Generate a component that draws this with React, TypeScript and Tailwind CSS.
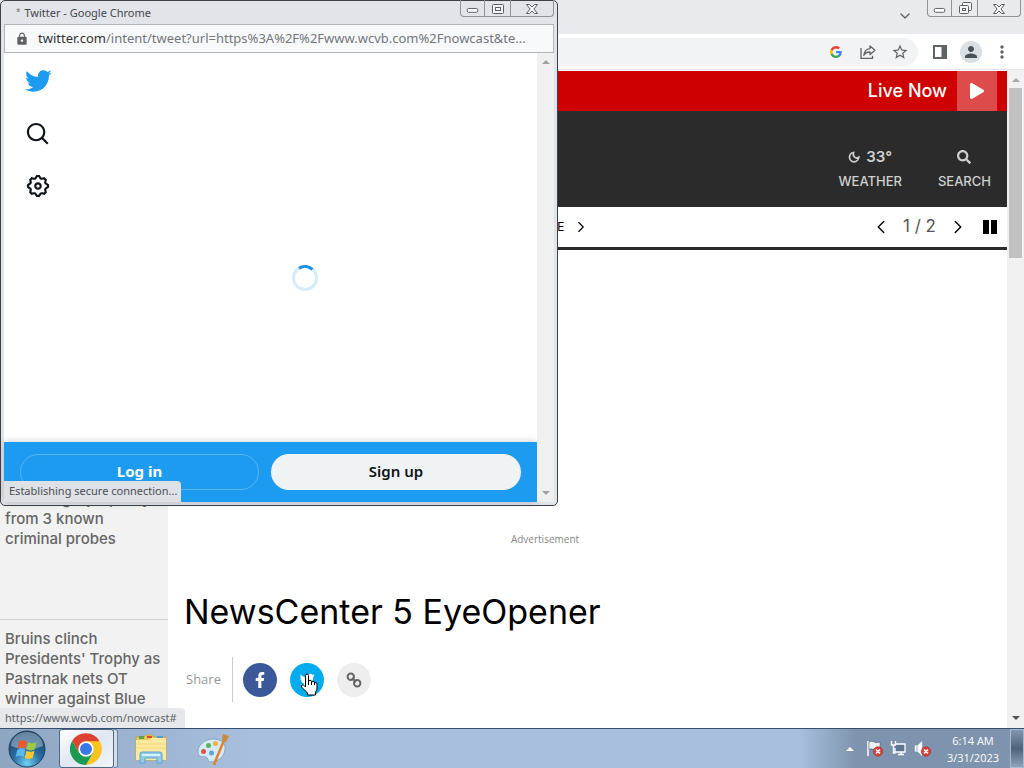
import type { ReactNode } from "react";
import { FaFacebookF, FaSearch, FaPlay } from "react-icons/fa";
import { MdLock, MdPerson, MdStarBorder, MdMoreVert } from "react-icons/md";
import { ChevronDown, ChevronLeft, ChevronRight } from "lucide-react";
import { clsx } from "clsx";

const BIRD =
  "M23.643 4.937c-.835.37-1.732.62-2.675.733.962-.576 1.7-1.49 2.048-2.578-.9.534-1.897.922-2.958 1.13-.85-.904-2.06-1.47-3.4-1.47-2.572 0-4.658 2.086-4.658 4.66 0 .364.042.718.12 1.06-3.873-.195-7.304-2.05-9.602-4.868-.4.69-.63 1.49-.63 2.342 0 1.616.823 3.043 2.072 3.878-.764-.025-1.482-.234-2.11-.583v.06c0 2.257 1.605 4.14 3.737 4.568-.392.106-.803.162-1.227.162-.3 0-.593-.028-.877-.082.593 1.85 2.313 3.198 4.352 3.234-1.595 1.25-3.604 1.995-5.786 1.995-.376 0-.747-.022-1.112-.065 2.062 1.323 4.51 2.093 7.14 2.093 8.57 0 13.255-7.098 13.255-13.254 0-.2-.005-.402-.014-.602.91-.658 1.7-1.477 2.323-2.41z";
const SEARCH =
  "M10.25 3.75c-3.59 0-6.5 2.91-6.5 6.5s2.91 6.5 6.5 6.5c1.795 0 3.419-.726 4.596-1.904 1.178-1.177 1.904-2.801 1.904-4.596 0-3.59-2.91-6.5-6.5-6.5zm-8.5 6.5c0-4.694 3.806-8.5 8.5-8.5s8.5 3.806 8.5 8.5c0 1.986-.682 3.815-1.824 5.262l4.781 4.781-1.414 1.414-4.781-4.781c-1.447 1.142-3.276 1.824-5.262 1.824-4.694 0-8.5-3.806-8.5-8.5z";
const GEAR =
  "M10.54 1.75h2.92l1.57 2.36c.11.17.32.25.53.21l2.53-.59 2.17 2.17-.58 2.54c-.05.2.04.41.21.53l2.36 1.57v2.92l-2.36 1.57c-.17.12-.26.33-.21.53l.58 2.54-2.17 2.17-2.53-.59c-.21-.04-.42.04-.53.21l-1.57 2.36h-2.92l-1.58-2.36c-.11-.17-.32-.25-.52-.21l-2.54.59-2.17-2.17.58-2.54c.05-.2-.03-.41-.21-.53l-2.35-1.57v-2.92L4.1 8.97c.18-.12.26-.33.21-.53L3.73 5.9 5.9 3.73l2.54.59c.2.04.41-.04.52-.21l1.58-2.36zm1.07 2l-.98 1.47C10.05 6.08 9 6.5 7.99 6.27l-1.46-.34-.6.6.33 1.46c.24 1.01-.18 2.07-1.05 2.64l-1.46.98v.78l1.46.98c.87.57 1.29 1.63 1.05 2.64l-.33 1.46.6.6 1.46-.34c1.01-.23 2.06.19 2.64 1.05l.98 1.47h.78l.97-1.47c.58-.86 1.63-1.28 2.65-1.05l1.45.34.61-.6-.34-1.46c-.23-1.01.18-2.07 1.05-2.64l1.47-.98v-.78l-1.47-.98c-.87-.57-1.28-1.63-1.05-2.64l.34-1.46-.61-.6-1.45.34c-1.02.23-2.07-.19-2.65-1.05l-.97-1.47h-.78zM12 10.5c-.83 0-1.5.67-1.5 1.5s.67 1.5 1.5 1.5c.83 0 1.5-.67 1.5-1.5s-.67-1.5-1.5-1.5zM8.5 12c0-1.93 1.56-3.5 3.5-3.5 1.93 0 3.5 1.57 3.5 3.5s-1.57 3.5-3.5 3.5c-1.94 0-3.5-1.57-3.5-3.5z";

interface GlyphProps {
  d: string;
  className?: string;
}

function Glyph({ d, className }: Readonly<GlyphProps>) {
  return (
    <svg viewBox="0 0 24 24" fill="currentColor" className={className}>
      <path d={d} />
    </svg>
  );
}

interface IconButtonProps {
  label: string;
  className?: string;
  children?: ReactNode;
}

function IconButton({ label, className, children }: Readonly<IconButtonProps>) {
  return (
    <button type="button" aria-label={label} className={clsx("flex shrink-0 items-center justify-center", className)}>
      {children}
    </button>
  );
}

function WindowControls({ maximized }: Readonly<{ maximized: boolean }>) {
  return (
    <div className="flex h-[17px] divide-x divide-[#8f9399] rounded-b-[4px] border border-t-0 border-[#8f9399] text-[#5a5e66]">
      <IconButton label="Minimize" className="w-6">
        <svg viewBox="0 0 24 16" className="h-4 w-6" fill="#fff" stroke="currentColor">
          <rect x="6.5" y="8.5" width="11" height="4" rx="1.5" />
        </svg>
      </IconButton>
      <IconButton label={maximized ? "Restore" : "Maximize"} className="w-[26px]">
        {maximized ? (
          <svg viewBox="0 0 24 16" className="h-4 w-6" fill="#f4f5f7" stroke="currentColor">
            <rect x="9.5" y="2.5" width="9" height="8" rx="1" />
            <rect x="6.5" y="5.5" width="9" height="8" rx="1" />
            <rect x="9.5" y="8.5" width="3" height="2" />
          </svg>
        ) : (
          <svg viewBox="0 0 24 16" className="h-4 w-6" fill="#f4f5f7" stroke="currentColor">
            <rect x="6.5" y="4.5" width="11" height="9" rx="1" />
            <rect x="9.5" y="7.5" width="5" height="3" />
          </svg>
        )}
      </IconButton>
      <IconButton label="Close" className="w-[42px]">
        <svg viewBox="0 0 24 16" className="h-4 w-6" fill="#f4f5f7" stroke="currentColor">
          <path d="M6.5 4.5h3l2.500 2.500 2.500-2.500h3l-3.500 4.500 3.500 4.500h-3l-2.500-2.500-2.500 2.500h-3l3.500-4.500z" />
        </svg>
      </IconButton>
    </div>
  );
}

function GoogleG() {
  return (
    <svg viewBox="0 0 24 24" className="size-3">
      <path fill="#4285f4" d="M23.500 12.300c0-.8-.1-1.600-.2-2.300H12v4.500h6.500c-.3 1.500-1.100 2.700-2.400 3.600v3h3.900c2.200-2.100 3.500-5.200 3.500-8.800z" />
      <path fill="#34a853" d="M12 24c3.200 0 6-1.100 8-2.900l-3.900-3c-1.100.7-2.400 1.200-4.100 1.200-3.100 0-5.800-2.100-6.700-5H1.300v3.100C3.300 21.300 7.300 24 12 24z" />
      <path fill="#fbbc05" d="M5.300 14.300c-.5-1.500-.5-3.100 0-4.600V6.600h-4c-1.700 3.400-1.700 7.400 0 10.800z" />
      <path fill="#ea4335" d="M12 4.800c1.800 0 3.300.6 4.600 1.800L20 3.200C17.900 1.200 15.200 0 12 0 7.300 0 3.300 2.700 1.300 6.600l4 3.100c.9-2.900 3.600-4.900 6.700-4.900z" />
    </svg>
  );
}

function BrowserChrome() {
  return (
    <header className="shrink-0 text-[#5f6368]">
      <div className="flex h-[34px] items-start justify-end bg-[#e8eaed] pr-[3px]">
        <IconButton label="Search tabs" className="mt-2 mr-3.5 size-4">
          <ChevronDown className="size-4" />
        </IconButton>
        <WindowControls maximized />
      </div>
      <div className="flex h-9 items-center border-b border-[#e3e5e8] bg-white pr-3.5">
        <div className="flex h-7 flex-1 items-center justify-end gap-4 rounded-full bg-[#f1f3f4] pr-2.5">
          <IconButton label="Search with Google" className="size-4">
            <GoogleG />
          </IconButton>
          <IconButton label="Share this page" className="size-4">
            <svg viewBox="0 0 16 16" className="size-4" fill="none" stroke="currentColor" strokeWidth="1.3">
              <path d="M1 4v10.300h11.500v-2.500" />
              <path d="M10 2l5 4.300-5 4.200V8C7 8 5 9 3.800 11.300 4.200 7.500 6.500 5 10 4.600z" strokeLinejoin="round" />
            </svg>
          </IconButton>
          <IconButton label="Bookmark this tab" className="size-4">
            <MdStarBorder className="size-[18px] shrink-0" />
          </IconButton>
        </div>
        <IconButton label="Side panel" className="ml-3.5 size-4">
          <svg viewBox="0 0 16 16" className="size-4">
            <path fill="currentColor" fillRule="evenodd" d="M1 1h14v14H1zM3 3v10h6.500V3z" />
          </svg>
        </IconButton>
        <IconButton label="Profile" className="ml-3 size-[22px] rounded-full bg-[#dadfe4] text-[#4a5258]">
          <MdPerson className="size-[18px]" />
        </IconButton>
        <IconButton label="Menu" className="ml-3 size-4">
          <MdMoreVert className="size-5 shrink-0" />
        </IconButton>
      </div>
    </header>
  );
}

function StationHeader() {
  return (
    <>
      <div className="flex h-10 items-center justify-end bg-[#cf0000] pr-2.5 font-['Inter',sans-serif] text-white">
        <span className="mr-2.5 text-lg font-medium">Live Now</span>
        <IconButton label="Play live stream" className="size-10 bg-[#de4b4b]">
          <FaPlay className="size-4" />
        </IconButton>
      </div>
      <div className="flex h-24 items-center justify-end gap-9 bg-[#2b2b2b] pt-5 pr-4 font-['Inter',sans-serif] text-[13px] font-medium text-[#cfcfcf]">
        <a href="#weather" className="flex flex-col items-center">
          <span className="flex h-6 items-center gap-1.5 text-[15px] font-semibold">
            <svg viewBox="0 0 24 24" className="size-3" fill="none" stroke="currentColor" strokeWidth="3.5">
              <path d="M11 3C6 3.500 3 8 3 12.500 3 17.500 7 21.500 12 21.500s9-4 9.500-9c-3 2-6.500 1.500-8.500-.5s-3-6-2-9z" />
            </svg>
            33°
          </span>
          <span className="leading-6">WEATHER</span>
        </a>
        <a href="#search" className="flex flex-col items-center">
          <span className="flex h-6 items-center">
            <FaSearch className="size-3.5" />
          </span>
          <span className="leading-6">SEARCH</span>
        </a>
      </div>
      <nav className="flex h-[43px] items-center border-b-[3px] border-[#2b2b2b] bg-white pr-[7px] font-['Inter',sans-serif] text-black">
        <a href="#more" className="flex flex-1 items-center gap-2 pl-[504px] text-xs whitespace-nowrap">
          SEE MORE
          <ChevronRight className="size-[18px]" strokeWidth={1.5} />
        </a>
        <IconButton label="Previous" className="size-5">
          <ChevronLeft className="size-[22px] shrink-0" strokeWidth={1.5} />
        </IconButton>
        <span className="mx-3 text-[17px] text-[#555]">1 / 2</span>
        <IconButton label="Next" className="size-5">
          <ChevronRight className="size-[22px] shrink-0" strokeWidth={1.5} />
        </IconButton>
        <IconButton label="Pause" className="ml-3 size-5">
          <svg viewBox="0 0 14 14" className="size-3.5" fill="currentColor">
            <path d="M0 0h6v14H0zM8 0h6v14H8z" />
          </svg>
        </IconButton>
      </nav>
    </>
  );
}

function Headlines() {
  return (
    <aside className="w-[168px] shrink-0 bg-[#f2f2f2] font-['Inter',sans-serif] text-[15px] leading-5 font-medium whitespace-nowrap text-[#666]">
      <a href="#probes" className="block border-b border-[#d2d2d2] px-[5px] pt-[239px] pb-[70px]">
        Other legal jeopardy
        <br />
        from 3 known
        <br />
        criminal probes
      </a>
      <a href="#bruins" className="block px-[5px] pt-[9px]">
        Bruins clinch
        <br />
        Presidents' Trophy as
        <br />
        Pastrnak nets OT
        <br />
        winner against Blue
      </a>
    </aside>
  );
}

function HandCursor() {
  return (
    <svg viewBox="0 0 20 24" className="pointer-events-none absolute top-2.5 left-2.5 h-6 w-5">
      <path
        d="M5.500 2.500q0-1.500 1.500-1.500t1.500 1.500v6q0-1.200 1.500-1.200t1.500 1.200v1q0-1.200 1.500-1.200t1.500 1.200v1q0-1 1.300-1t1.200 1.500V16l-1.500 3.500V22h-8v-2L2 14.500q-1.200-1.800 0-2.500t2.200.5l1.300 1.500z"
        fill="#fff"
        stroke="#000"
      />
      <path d="M8.500 8v4M11.500 9v3M14.500 10v2" stroke="#000" />
    </svg>
  );
}

function Article() {
  return (
    <main className="flex-1 bg-white pl-4">
      <div className="max-w-[722px] pt-[281px] text-center font-['Open_Sans',sans-serif] text-[10px] leading-4 text-[#888]">
        Advertisement
      </div>
      <h1 className="mt-[45px] font-['Inter',sans-serif] text-[34px] leading-10 text-black">NewsCenter 5 EyeOpener</h1>
      <div className="mt-[25px] flex items-center">
        <span className="w-12 pl-0.5 font-['Open_Sans',sans-serif] text-[13px] text-[#999]">Share</span>
        <div className="mr-2.5 h-[45px] w-px bg-[#ccc]" />
        <div className="flex gap-[13px]">
          <IconButton label="Share on Facebook" className="size-[34px] rounded-full bg-[#3b5998] text-white">
            <FaFacebookF className="size-4" />
          </IconButton>
          <div className="relative">
            <IconButton label="Share on Twitter" className="size-[34px] rounded-full bg-[#00aced] text-white">
              <Glyph d={BIRD} className="size-4" />
            </IconButton>
            <HandCursor />
          </div>
          <IconButton label="Copy link" className="size-[34px] rounded-full bg-[#eee] text-[#666]">
            <svg viewBox="0 0 16 16" className="size-4" fill="none" stroke="currentColor" strokeWidth="2">
              <circle cx="4.800" cy="4.800" r="3.200" />
              <circle cx="11.200" cy="11.200" r="3.200" />
              <path d="M6 6l4 4" />
            </svg>
          </IconButton>
        </div>
      </div>
    </main>
  );
}

function Arrow({ down, className }: Readonly<{ down?: boolean; className?: string }>) {
  return (
    <svg viewBox="0 0 8 4" className={clsx("h-1 w-2", className)} fill="currentColor">
      <path d={down ? "M0 0h8L4 4z" : "M0 4h8L4 0z"} />
    </svg>
  );
}

function PageScrollbar() {
  return (
    <div className="flex w-[17px] shrink-0 flex-col items-center bg-[#f1f1f1] py-2">
      <Arrow className="text-[#a3a3a3]" />
      <div className="mt-1.5 flex w-[13px] flex-1 flex-col">
        <div className="h-[27%] bg-[#c1c1c1]" />
      </div>
      <Arrow down className="text-[#505050]" />
    </div>
  );
}

function TwitterPopup() {
  return (
    <section className="absolute top-0 left-0 flex h-[506px] w-[558px] flex-col rounded-[5px] border border-[#3f4148] bg-[#e1e4e9] px-[3px] pb-[3px] font-['Noto_Sans',sans-serif]">
      <div className="-mt-px flex h-6 items-start justify-between">
        <h2 className="flex gap-1 pt-1 pl-3 text-[11px] leading-[18px] text-[#45484d]">
          <span className="text-[8px] leading-4 text-[#6b6f76]">*</span>
          Twitter - Google Chrome
        </h2>
        <WindowControls maximized={false} />
      </div>
      <div className="flex h-[29px] shrink-0 items-center border border-[#b3b5b9] bg-[#f8f9fa] px-2.5">
        <MdLock className="mr-[9px] size-[14px] shrink-0 text-[#5f6368]" />
        <p className="truncate text-[13px] text-[#74777c]">
          <span className="text-[#303236]">twitter.com</span>
          /intent/tweet?url=https%3A%2F%2Fwww.wcvb.com%2Fnowcast&amp;te...
        </p>
      </div>
      <div className="flex min-h-0 flex-1">
        <div className="flex min-w-0 flex-1 flex-col bg-white">
          <div className="relative flex-1">
            <nav className="flex flex-col items-start gap-[26px] px-5 pt-3.5 text-[#0f1419]">
              <a href="#home" aria-label="Twitter" className="text-[#1d9bf0]">
                <Glyph d={BIRD} className="size-7" />
              </a>
              <a href="#explore" aria-label="Explore" className="pl-px">
                <Glyph d={SEARCH} className="size-[26px]" />
              </a>
              <a href="#settings" aria-label="Settings" className="pl-px">
                <Glyph d={GEAR} className="size-[26px]" />
              </a>
            </nav>
            <div className="absolute inset-0 flex items-center justify-center pt-[60px] pl-[68px]">
              <svg viewBox="0 0 26 26" className="size-[26px]" fill="none" strokeWidth="3">
                <circle cx="13" cy="13" r="11.500" stroke="#d5ecfb" />
                <path d="M7 3.200A11.500 11.500 0 0 1 20.500 4.300" stroke="#1d8fdc" />
              </svg>
            </div>
          </div>
          <div className="flex h-[60px] shrink-0 items-center gap-3 bg-[#1d9bf0] px-4 text-[15px] font-bold shadow-[0_0_8px_rgba(0,0,0,0.2)]">
            <button type="button" className="h-9 w-[239px] rounded-full border border-[#56b7f5] pb-0.5 text-white">
              Log in
            </button>
            <button type="button" className="h-9 flex-1 rounded-full bg-[#eff3f4] pb-0.5 font-semibold text-[#0f1419]">
              Sign up
            </button>
          </div>
        </div>
        <div className="flex w-[17px] flex-col items-center justify-between bg-[#f0f0f0] py-[7px] text-[#a0a0a0]">
          <Arrow />
          <Arrow down />
        </div>
      </div>
      <div className="absolute bottom-[3px] left-[3px] h-[21px] rounded-tr-[4px] bg-[#dee1e6] pr-1 pl-[5px] text-[11px] leading-5 whitespace-nowrap text-[#4c4f54]">
        Establishing secure connection...
      </div>
    </section>
  );
}

function StartOrb() {
  return (
    <svg viewBox="0 0 38 38" className="size-[38px]">
      <defs>
        <radialGradient id="orb" cx="50%" cy="90%" r="85%">
          <stop offset="0" stopColor="#6fd3f2" />
          <stop offset="0.45" stopColor="#2a6ea3" />
          <stop offset="1" stopColor="#1c3d63" />
        </radialGradient>
      </defs>
      <circle cx="19" cy="19" r="18" fill="url(#orb)" stroke="#24415f" />
      <path d="M3 16a16 14 0 0 1 32 0q-16 7-32 0z" fill="#c8dcec" opacity="0.45" />
      <path d="M11 11.500q4-2.500 8 .2l-1.500 7q-4-2.500-8-.2z" fill="#f0562b" />
      <path d="M20.300 12.300q4 2.200 8.200 0l-1.700 7q-4 2.200-8-.1z" fill="#9ccb3c" />
      <path d="M9.200 20q4-2.500 8 .1l-1.600 7q-4-2.500-8-.2z" fill="#5bb9ee" />
      <path d="M18.500 20.700q4 2.200 8 .1l-1.700 7q-4 2.200-8-.1z" fill="#fdc92e" />
    </svg>
  );
}

function ChromeLogo() {
  return (
    <svg viewBox="0 0 48 48" className="size-8">
      <path fill="#dd4333" d="M3.200 12L13.600 30 24 13h20.800A24 24 0 0 0 3.200 12z" />
      <path fill="#fcc31e" d="M44.800 12.500H24l10.400 17.500L24 48A24 24 0 0 0 44.800 12.500z" />
      <path fill="#1c9a53" d="M3.200 12L13.600 30H34.400L24 48A24 24 0 0 1 3.200 12z" />
      <circle cx="24" cy="24" r="11.500" fill="#fff" />
      <circle cx="24" cy="24" r="9" fill="#3b78e7" />
    </svg>
  );
}

function ExplorerLogo() {
  return (
    <svg viewBox="0 0 34 32" className="h-8 w-[34px]">
      <path d="M2 4h8l2-2h6l2 2h12v23H2z" fill="#e9c95c" stroke="#c9a640" />
      <path d="M5 3h5v3H5z" fill="#5ca04a" />
      <path d="M13 3h5v2h-5z" fill="#d84a3a" />
      <path d="M23 3h6v3h-6z" fill="#4f9bd6" />
      <path d="M2 7h13l3-2h14v22H2z" fill="#fbe9a0" />
      <path d="M2 11h30M2 15h30" stroke="#f1d877" />
      <path d="M6 30V21q0-2 2-2h18q2 0 2 2v9h-5v-5H11v5z" fill="#8fcbea" stroke="#5aa5d2" />
      <path d="M8 21h18v2H8z" fill="#d9f1fb" />
    </svg>
  );
}

function PaintLogo() {
  return (
    <svg viewBox="0 0 34 32" className="h-8 w-[34px]">
      <path d="M17 6c8 0 13 4 12 11-1 8-8 12-15 12-3 0-1-4-4-5s-7 1-8-4C1 12 9 6 17 6z" fill="#d6e9f5" stroke="#7da9c8" />
      <circle cx="7.500" cy="18.500" r="2.500" fill="#dd5549" />
      <circle cx="12.500" cy="12.500" r="2.500" fill="#5eb358" />
      <circle cx="19.500" cy="10.500" r="2.500" fill="#edb43c" />
      <circle cx="15.500" cy="20" r="2.500" fill="#58a9dc" />
      <path d="M29 5L19 29l-1 3" stroke="#e0822f" strokeWidth="2.5" fill="none" />
      <path d="M27 1l6 2-3 6-4-2z" fill="#c98a3b" />
    </svg>
  );
}

function ErrorBadge() {
  return (
    <g>
      <circle cx="12" cy="11.500" r="4.700" fill="#d8403a" stroke="#a92620" strokeWidth="0.6" />
      <path d="M10 9.500l4 4M14 9.500l-4 4" stroke="#fff" strokeWidth="1.5" />
    </g>
  );
}

function Taskbar() {
  return (
    <footer className="flex h-10 shrink-0 items-center border-t border-[#34506e] bg-linear-to-r from-[#8ea6c2] via-[#a8c0dd] via-25% to-[#a8c0dd] font-['Open_Sans',sans-serif]">
      <IconButton label="Start" className="ml-2">
        <StartOrb />
      </IconButton>
      <IconButton
        label="Google Chrome"
        className="ml-[13px] h-full w-[55px] rounded-[3px] border border-[#4f6984] bg-linear-to-br from-white via-[#dfe7f1] to-[#f2f6fa] pr-0.5"
      >
        <ChromeLogo />
      </IconButton>
      <div className="h-full w-1 rounded-r-[3px] border border-l-0 border-[#6b84a0] bg-[#d3deeb]" />
      <IconButton label="Windows Explorer" className="ml-4">
        <ExplorerLogo />
      </IconButton>
      <IconButton label="Paint" className="ml-7">
        <PaintLogo />
      </IconButton>
      <div className="ml-auto flex h-full items-center bg-linear-to-r from-[#a8c0dd] via-[#7e94ae] via-25% to-[#7e94ae] pl-[46px] text-white">
        <IconButton label="Show hidden icons" className="mr-3">
          <Arrow />
        </IconButton>
        <div className="flex gap-[7px]">
          <IconButton label="Action Center">
            <svg viewBox="0 0 17 17" className="size-[17px]">
              <path d="M2 1v15" stroke="#fff" strokeWidth="1.5" />
              <path d="M3 2q3-1.500 5 0t6 0v8q-3 1-6-.5T3 9.500z" fill="#eef2f6" stroke="#3c4c5e" strokeWidth="0.5" />
              <ErrorBadge />
            </svg>
          </IconButton>
          <IconButton label="Network">
            <svg viewBox="0 0 17 17" className="size-[17px]" fill="none" stroke="#fff" strokeWidth="1.3">
              <path d="M6 4h9v8H5V8" fill="#5d7590" />
              <path d="M8 14.500h6M11 12v3M1.500 1v4h4V1M3.500 5v8h2" />
            </svg>
          </IconButton>
          <IconButton label="Volume">
            <svg viewBox="0 0 17 17" className="size-[17px]">
              <path d="M1 5.500v6h1.500v-6zM3.500 5.500L8 1.500v14l-4.500-4z" fill="#fff" stroke="#dbe4ee" strokeWidth="0.5" />
              <ErrorBadge />
            </svg>
          </IconButton>
        </div>
        <div className="mr-[3px] ml-2 w-[68px] text-center text-[11px] leading-[17px]">
          <p>6:14 AM</p>
          <p>3/31/2023</p>
        </div>
        <IconButton
          label="Show desktop"
          className="h-full w-3.5 border border-[#a9bccf] bg-linear-to-b from-[#8397ae] via-[#4f637b] to-[#8ea2b9]"
        />
      </div>
    </footer>
  );
}

export default function App() {
  return (
    <div className="relative flex h-screen flex-col overflow-hidden bg-white">
      <BrowserChrome />
      <div className="relative flex min-h-0 flex-1">
        <div className="flex min-w-0 flex-1 flex-col overflow-hidden border-t border-white">
          <StationHeader />
          <div className="flex min-h-0 flex-1">
            <Headlines />
            <Article />
          </div>
        </div>
        <PageScrollbar />
        <div className="absolute bottom-0 left-0 h-5 rounded-tr-[4px] bg-[#e6e8eb] pr-2 pl-[5px] font-['Noto_Sans',sans-serif] text-[11px] leading-5 text-[#5f6368]">
          https://www.wcvb.com/nowcast#
        </div>
      </div>
      <Taskbar />
      <TwitterPopup />
    </div>
  );
}
